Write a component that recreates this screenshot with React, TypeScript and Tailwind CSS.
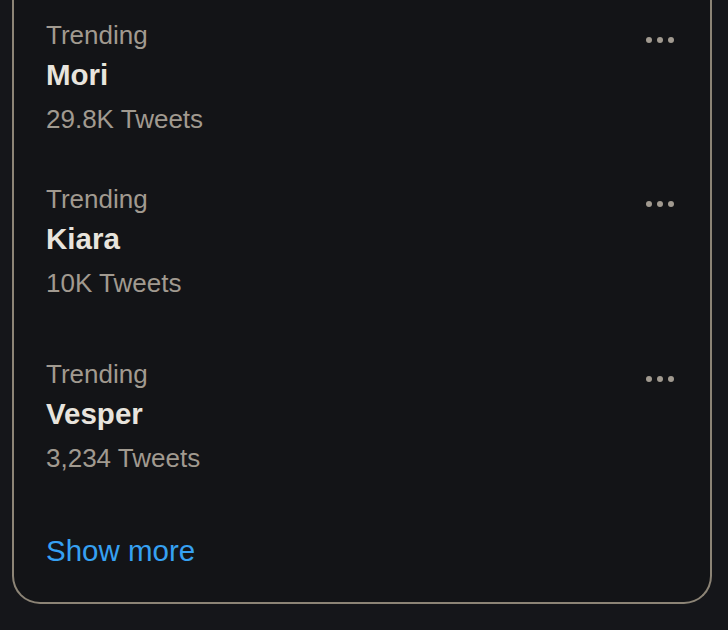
const TRENDS = [
  { name: 'Mori', count: '29.8K Tweets', pt: 'pt-[18px]' },
  { name: 'Kiara', count: '10K Tweets', pt: 'pt-[46px]' },
  { name: 'Vesper', count: '3,234 Tweets', pt: 'pt-[57px]' },
];

function MoreDots() {
  return (
    <div className="flex gap-[5px] pt-[19px] pr-[36px]">
      <span className="w-[6px] h-[6px] rounded-full bg-[#a19a90]" />
      <span className="w-[6px] h-[6px] rounded-full bg-[#a19a90]" />
      <span className="w-[6px] h-[6px] rounded-full bg-[#a19a90]" />
    </div>
  );
}

function TrendRow({ name, count, pt }: { name: string; count: string; pt: string }) {
  return (
    <div className={`flex justify-between ${pt}`}>
      <div className="pl-[32px]">
        <div className="text-[26px] leading-[34px] text-[#a19a90]">Trending</div>
        <div className="mt-[5px] text-[29.5px] leading-[36px] font-bold text-[#e8e4dd]">{name}</div>
        <div className="mt-[9px] text-[26px] leading-[34px] text-[#a19a90]">{count}</div>
      </div>
      <MoreDots />
    </div>
  );
}

export default function App() {
  return (
    <div className="w-[728px] h-[630px] overflow-hidden bg-[#15161a] font-['Liberation_Sans',Arial,sans-serif]">
      <div className="ml-[12px] w-[700px] border-2 border-t-0 border-[#8c8476] rounded-b-[28px] bg-[#131417]">
        {TRENDS.map((t) => (
          <TrendRow key={t.name} name={t.name} count={t.count} pt={t.pt} />
        ))}
        <div className="pl-[32px] pt-[56px] pb-[31px]">
          <span className="text-[29.5px] leading-[40px] text-[#36a1f2]">Show more</span>
        </div>
      </div>
    </div>
  );
}
